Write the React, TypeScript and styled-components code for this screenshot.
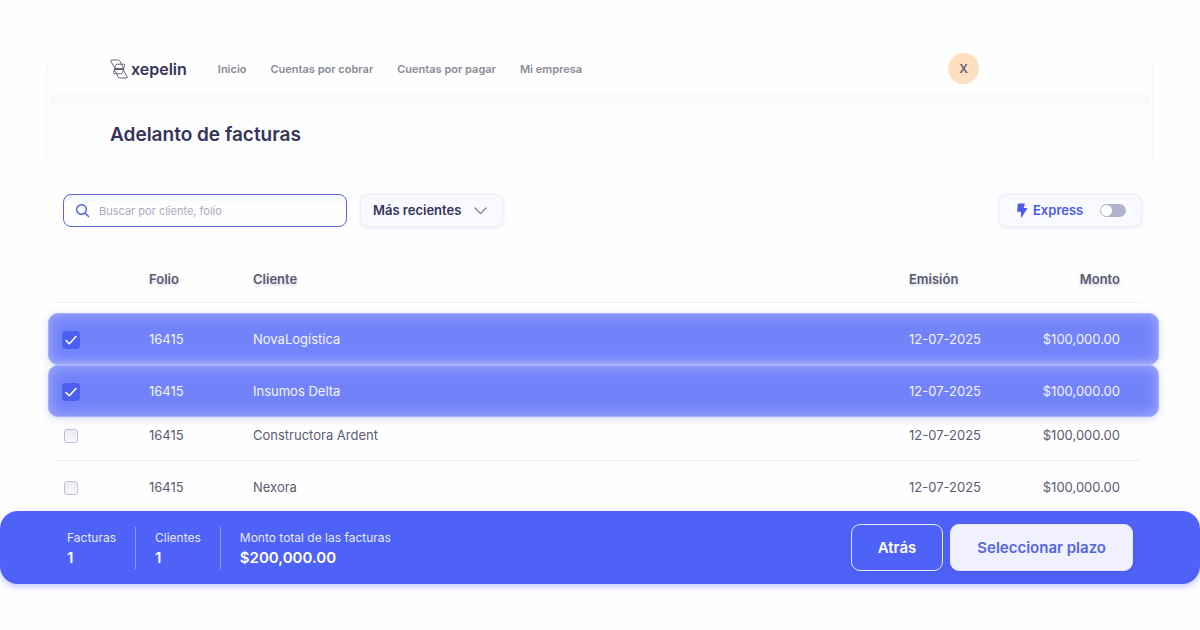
import React from "react";
import styled, { createGlobalStyle, css } from "styled-components";

const GlobalStyle = createGlobalStyle`
  *, *::before, *::after { box-sizing: border-box; }
  body {
    margin: 0;
    background: #fefefe;
    color: #35355a;
    font-family: Inter, "Liberation Sans", sans-serif;
  }
  button, input, select { font-family: inherit; }
`;

const Page = styled.div`
  padding: 44px 0;
`;

const Shell = styled.div`
  margin: 0 47px;
  padding: 0 2px;
  border: 1px solid #f9f9fb;
  border-bottom: 0;
  border-radius: 16px 16px 0 0;
  box-shadow: -8px 24px 16px -8px #fbfbfc;
`;

const Header = styled.header`
  display: flex;
  align-items: center;
  height: 50px;
  padding: 0 171px 3px 60px;
`;

const Brand = styled.a`
  display: flex;
  align-items: center;
  gap: 3px;
  margin-right: 31px;
  color: #35355a;
  font-size: 16px;
  font-weight: 600;
  line-height: 20px;
  text-decoration: none;
`;

const Nav = styled.nav`
  display: flex;
  flex: 1;
  gap: 24px;
`;

const NavLink = styled.a`
  color: #8a8b98;
  font-size: 11px;
  font-weight: 600;
  line-height: 16px;
  text-decoration: none;
  white-space: nowrap;
`;

const Avatar = styled.button`
  width: 31px;
  height: 31px;
  padding: 0;
  border: 0;
  border-radius: 50%;
  background: #fee0c0;
  color: #5c5f72;
  font-size: 12px;
  font-weight: 600;
`;

const TitleBand = styled.div`
  display: flex;
  align-items: center;
  height: 71px;
  padding: 0 60px 0;
  background: linear-gradient(#f6f8fb, #fafcfc 8px, #fdfdfd 24px);
`;

const Title = styled.h1`
  margin: 0;
  padding-top: 8px;
  font-size: 19px;
  font-weight: 600;
  line-height: 24px;
`;

const Panel = styled.main`
  margin: 0 28px;
  padding: 28px 13px 0 20px;
  border-radius: 24px 24px 0 0;
  background: #fefefe;
`;

const Toolbar = styled.div`
  display: flex;
  gap: 13px;
  padding: 0 17px 0 15px;
`;

const SearchBox = styled.label`
  display: flex;
  align-items: center;
  gap: 9px;
  width: 284px;
  height: 33px;
  padding: 0 11px;
  border: 1px solid #5b68dc;
  border-radius: 8px;
  background: linear-gradient(#f1f3fe, #fefefe 8px);
`;

const SearchInput = styled.input`
  flex: 1;
  min-width: 0;
  padding: 0;
  border: 0;
  outline: 0;
  background: transparent;
  color: #35355a;
  font-size: 11px;
  line-height: 16px;
  &::placeholder { color: #a9aabd; opacity: 1; }
`;

const softCard = css`
  height: 33px;
  border: 1px solid #eef0f9;
  border-radius: 8px;
  background: #f9faff;
  box-shadow: 0 1px 4px #e6e9f8;
`;

const SortBox = styled.div`
  display: grid;
  align-items: center;
  width: 143px;
  svg { grid-area: 1 / 1; justify-self: end; margin-right: 16px; pointer-events: none; }
`;

const SortSelect = styled.select`
  ${softCard}
  grid-area: 1 / 1;
  width: 100%;
  padding: 0 12px 1px;
  appearance: none;
  color: #35355a;
  font-size: 13px;
  font-weight: 600;
`;

const ExpressToggle = styled.label`
  ${softCard}
  display: flex;
  align-items: center;
  width: 143px;
  margin-left: auto;
  padding: 0 15px 1px 16px;
  color: #4c5bea;
  font-size: 13px;
  font-weight: 600;
  svg { margin-right: 5px; }
`;

const Switch = styled.input`
  display: flex;
  align-items: center;
  width: 26px;
  height: 13px;
  margin: 0 0 0 auto;
  padding: 1px;
  appearance: none;
  border-radius: 7px;
  background: #b1b2cb;
  &::before {
    content: "";
    width: 11px;
    height: 11px;
    border-radius: 50%;
    background: #fff;
  }
  &:checked { justify-content: flex-end; background: #4e62f8; }
`;

const Table = styled.table`
  display: block;
  margin-top: 28px;
  font-size: 13px;
  line-height: 16px;
`;

const TableHead = styled.thead`
  display: block;
  margin-bottom: 10px;
`;

const TableBody = styled.tbody`
  display: block;
`;

const selectedRow = css`
  border: 1px solid #a3aefc;
  border-radius: 10px;
  background: #7283fa;
  box-shadow: inset 0 0 12px 2px #9ba7fb, 0 2px 8px #d5dafd;
  color: #f3f4ff;
`;

const plainRow = css`
  border: 0 solid transparent;
  border-width: 0 1px;
  background: linear-gradient(#edeef8, #edeef8) 8px 100% / calc(100% - 25px) 1px no-repeat;
  color: #5b5c71;
`;

const Row = styled.tr<{ $selected?: boolean; $height?: number; $lift?: number }>`
  display: grid;
  grid-template-columns: 87px 104px minmax(0, 1fr) 111px 100px;
  align-items: center;
  height: ${(p) => p.$height ?? 52}px;
  padding: 0 38px ${(p) => p.$lift ?? 0}px 13px;
  ${(p) => (p.$selected ? selectedRow : plainRow)}
`;

const HeadCell = styled.th<{ $end?: boolean }>`
  padding: 0;
  color: #5b5c71;
  font-weight: 600;
  text-align: ${(p) => (p.$end ? "right" : "left")};
  text-shadow: 0 2px 3px #d5d7e6;
`;

const Cell = styled.td<{ $end?: boolean }>`
  padding: 0;
  text-align: ${(p) => (p.$end ? "right" : "left")};
`;

const CheckCell = styled.td`
  display: flex;
  justify-content: center;
  width: 18px;
  padding: 1px 0 0;
`;

const Check = styled.input`
  width: 14px;
  height: 14px;
  margin: 0;
  appearance: none;
  border: 1px solid #bfc0d6;
  border-radius: 3px;
  background: linear-gradient(#e8e9f3, #f8f8fc);
  &:checked {
    width: 18px;
    height: 18px;
    border: 0;
    border-radius: 4px;
    background: #4c5ff0
      url("data:image/svg+xml,%3Csvg xmlns='http://www.w3.org/2000/svg' viewBox='0 0 18 18' fill='none' stroke='white' stroke-width='1.6' stroke-linecap='round' stroke-linejoin='round'%3E%3Cpath d='M4 9.5l3.3 3.2L14 5.5'/%3E%3C/svg%3E");
  }
`;

const SummaryBar = styled.footer`
  position: relative;
  display: flex;
  align-items: center;
  justify-content: space-between;
  height: 73px;
  margin-top: -2px;
  padding: 0 67px;
  border-radius: 18px;
  background: #4e62f8;
  box-shadow: 0 3px 6px #c3caf8;
  color: #fff;
`;

const Stats = styled.dl`
  display: flex;
  margin: 0;
`;

const Stat = styled.div`
  display: flex;
  flex-direction: column;
  justify-content: center;
  height: 42px;
  padding: 0 19px;
  border-left: 1px solid #8f9cfb;
  &:first-child { padding-left: 0; border-left: 0; }
`;

const StatLabel = styled.dt`
  color: #e6e9ff;
  font-size: 12px;
  line-height: 20px;
`;

const StatValue = styled.dd`
  margin: 0;
  font-size: 15px;
  font-weight: 600;
  line-height: 20px;
`;

const Actions = styled.div`
  display: flex;
  gap: 7px;
`;

const ActionButton = styled.button<{ $primary?: boolean }>`
  height: 47px;
  padding: 0 26px 1px;
  border: 1px solid #e6e9ff;
  border-radius: 9px;
  background: ${(p) => (p.$primary ? "#f0f0fe" : "transparent")};
  color: ${(p) => (p.$primary ? "#5566e0" : "#fff")};
  font-size: 15px;
  font-weight: 600;
  box-shadow: 0 2px 4px #485ae8;
`;

const invoices = [
  { client: "NovaLogística", selected: true },
  { client: "Insumos Delta", selected: true },
  { client: "Constructora Ardent", selected: false, height: 44, lift: 8 },
  { client: "Nexora", selected: false },
];

const stats = [
  ["Facturas", "1"],
  ["Clientes", "1"],
  ["Monto total de las facturas", "$200,000.00"],
];

function LogoMark() {
  return (
    <svg width="18" height="20" viewBox="0 0 18 20" fill="none" stroke="#55566f" strokeWidth="0.9" strokeLinejoin="round">
      <path d="M1.6 1H8.4Q9.3 1 9.7 1.8L13.8 9.6H5.8Q5 9.6 4.6 8.8L.8 2.2Q.3 1 1.6 1Z" />
      <path d="M4.2 10.4H12.2Q13 10.4 13.4 11.2L17.2 17.8Q17.7 19 16.4 19H9.6Q8.7 19 8.3 18.2Z" />
      <path d="M7.2 5.2H13.6Q15 5.2 14.6 6.5L12.6 13.4Q12.2 14.7 10.9 14.7H4.6Q3.2 14.7 3.6 13.4L5.6 6.5Q6 5.2 7.2 5.2Z" />
      <path d="M5 9.9H13.5" strokeWidth="1.2" />
    </svg>
  );
}

export default function App() {
  return (
    <>
      <GlobalStyle />
      <Page>
        <Shell>
          <Header>
            <Brand href="#">
              <LogoMark />
              xepelin
            </Brand>
            <Nav>
              {["Inicio", "Cuentas por cobrar", "Cuentas por pagar", "Mi empresa"].map((item) => (
                <NavLink key={item} href="#">{item}</NavLink>
              ))}
            </Nav>
            <Avatar type="button">X</Avatar>
          </Header>
          <TitleBand>
            <Title>Adelanto de facturas</Title>
          </TitleBand>
        </Shell>
        <Panel>
          <Toolbar>
            <SearchBox>
              <svg width="15" height="15" viewBox="0 0 15 15" fill="none" stroke="#4c5bdc" strokeWidth="1.4" strokeLinecap="round">
                <circle cx="6.5" cy="6.5" r="4.8" />
                <path d="M10.2 10.2L13.6 13.6" />
              </svg>
              <SearchInput type="search" aria-label="Buscar" placeholder="Buscar por cliente, folio" />
            </SearchBox>
            <SortBox>
              <SortSelect aria-label="Ordenar">
                <option>Más recientes</option>
              </SortSelect>
              <svg width="13" height="8" viewBox="0 0 13 8" fill="none" stroke="#74768a" strokeWidth="1.2" strokeLinecap="round" strokeLinejoin="round">
                <path d="M1 1L6.5 6.6L12 1" />
              </svg>
            </SortBox>
            <ExpressToggle>
              <svg width="12" height="15" viewBox="0 0 12 15" fill="#4c5bea">
                <path d="M2.6.5H8.4Q9 .5 8.8 1.1L7.7 5H10.6Q11.6 5 11 5.9L5.6 14.2Q4.9 14.8 4.9 14V8.8H1.8Q1 8.8 1.1 8L1.8 1.2Q1.9.5 2.6.5Z" />
              </svg>
              Express
              <Switch type="checkbox" role="switch" />
            </ExpressToggle>
          </Toolbar>
          <Table>
            <TableHead>
              <Row $height={48}>
                <Cell />
                <HeadCell>Folio</HeadCell>
                <HeadCell>Cliente</HeadCell>
                <HeadCell>Emisión</HeadCell>
                <HeadCell $end>Monto</HeadCell>
              </Row>
            </TableHead>
            <TableBody>
              {invoices.map((row) => (
                <Row key={row.client} $selected={row.selected} $height={row.height} $lift={row.lift}>
                  <CheckCell>
                    <Check type="checkbox" defaultChecked={row.selected} aria-label={row.client} />
                  </CheckCell>
                  <Cell>16415</Cell>
                  <Cell>{row.client}</Cell>
                  <Cell>12-07-2025</Cell>
                  <Cell $end>$100,000.00</Cell>
                </Row>
              ))}
            </TableBody>
          </Table>
        </Panel>
        <SummaryBar>
          <Stats>
            {stats.map(([label, value]) => (
              <Stat key={label}>
                <StatLabel>{label}</StatLabel>
                <StatValue>{value}</StatValue>
              </Stat>
            ))}
          </Stats>
          <Actions>
            <ActionButton type="button">Atrás</ActionButton>
            <ActionButton type="button" $primary>Seleccionar plazo</ActionButton>
          </Actions>
        </SummaryBar>
      </Page>
    </>
  );
}
